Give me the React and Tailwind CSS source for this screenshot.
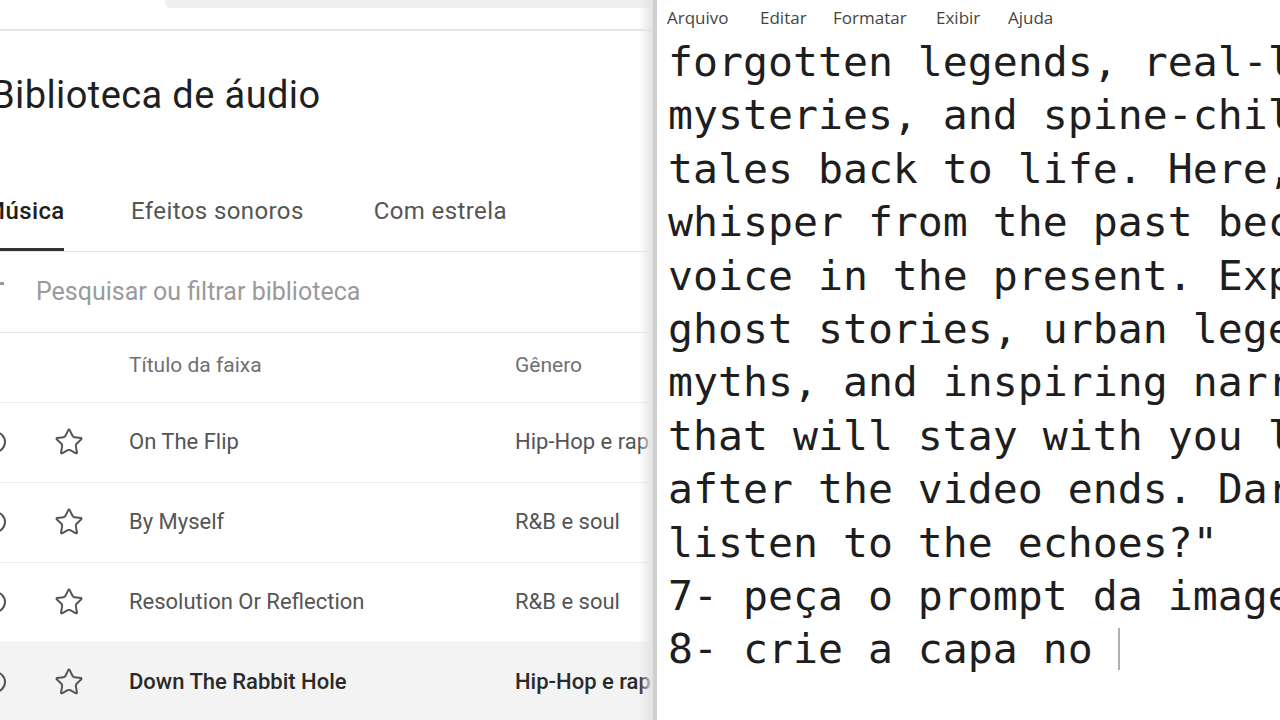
import { Star } from 'lucide-react';

const tracks = [
  { title: 'On The Flip', genre: 'Hip-Hop e rap' },
  { title: 'By Myself', genre: 'R&B e soul' },
  { title: 'Resolution Or Reflection', genre: 'R&B e soul' },
  { title: 'Down The Rabbit Hole', genre: 'Hip-Hop e rap', active: true },
];

const lines = [
  'forgotten legends, real-life',
  'mysteries, and spine-chilling',
  'tales back to life. Here, every',
  'whisper from the past becomes a',
  'voice in the present. Explore',
  'ghost stories, urban legends,',
  'myths, and inspiring narratives',
  'that will stay with you long',
  'after the video ends. Dare to',
  'listen to the echoes?"',
  '7- peça o prompt da imagem',
];

const AudioLibrary = () => (
  <div className="relative w-[653px] shrink-0 h-full overflow-hidden bg-white font-['Roboto',sans-serif]">
    {/* top bar */}
    <div className="h-[31px] border-b-2 border-[#e6e6e6]">
      <div className="ml-[165px] w-[485px] h-[8px] bg-[#efefef] rounded-b-md" />
    </div>

    <div className="h-[120px] pt-[42px]">
      <h1 className="-ml-[9px] text-[38px] leading-[44px] tracking-[0.4px] text-[#1f1f1f] whitespace-nowrap">Biblioteca de áudio</h1>
    </div>

    {/* tabs */}
    <div className="h-[101px] flex items-end border-b border-[#e5e5e5]">
      <div className="flex items-end text-[24px] leading-[28px] tracking-[0.4px] text-[#555] whitespace-nowrap">
        <div className="-ml-[16px] w-[80px] flex flex-col">
          <span className="text-[#1f1f1f] font-medium">Música</span>
          <span className="mt-[23px] h-[3px] w-[80px] bg-[#333]" />
        </div>
        <span className="ml-[67px] mb-[26px]">Efeitos sonoros</span>
        <span className="ml-[70px] mb-[26px]">Com estrela</span>
      </div>
    </div>

    {/* search */}
    <div className="h-[81px] flex items-center border-b border-[#e8e8e8] text-[25px] text-[#9a9a9a] whitespace-nowrap">
      <span className="-ml-[4px] w-[8px] h-[3px] bg-[#9a9a9a] -mt-[18px]" />
      <span className="ml-[32px]">Pesquisar ou filtrar biblioteca</span>
    </div>

    {/* header */}
    <div className="h-[70px] pb-[4px] flex items-center border-b border-[#ececec] text-[21px] text-[#707070]">
      <span className="ml-[129px] w-[386px]">Título da faixa</span>
      <span>Gênero</span>
    </div>

    {tracks.map((t) => (
      <div
        key={t.title}
        className={`h-[80px] pb-[2px] flex items-center border-b border-[#ececec] text-[22px] whitespace-nowrap ${t.active ? 'bg-[#f3f3f3] text-[#2a2a2a] font-medium' : 'text-[#555]'}`}
      >
        <span className="-ml-[16px] w-[22px] h-[22px] rounded-full border-2 border-[#555] shrink-0" />
        <Star className="ml-[48px] w-[30px] h-[30px] text-[#555] shrink-0" strokeWidth={1.6} />
        <span className="ml-[45px] w-[386px]">{t.title}</span>
        <span>{t.genre}</span>
      </div>
    ))}

    {/* right edge shade */}
    <div className="absolute top-0 right-0 h-full w-[14px] bg-gradient-to-r from-transparent to-[#e2e2e2]" />
  </div>
);

const Notepad = () => (
  <div className="flex-1 h-full overflow-hidden bg-white border-l-[4px] border-[#cfcfcf]">
    <div className="h-[35px] flex items-center pl-[10px] pt-[1px] text-[17px] text-[#444] font-['Open_Sans',sans-serif] whitespace-nowrap">
      <span className="w-[93px]">Arquivo</span>
      <span className="w-[73px]">Editar</span>
      <span className="w-[103px]">Formatar</span>
      <span className="w-[72px]">Exibir</span>
      <span>Ajuda</span>
    </div>
    <div className="pl-[11px] font-['DejaVu_Sans_Mono',monospace] text-[41.5px] leading-[53.4px] text-[#1e1e1e] whitespace-pre">
      {lines.map((l) => (
        <div key={l}>{l}</div>
      ))}
      <div className="flex items-center">
        <span>8- crie a capa no </span>
        <span className="w-[2px] h-[42px] bg-[#b0b0b0]" />
      </div>
    </div>
  </div>
);

export default function App() {
  return (
    <div className="w-[1280px] h-[720px] flex overflow-hidden bg-white">
      <AudioLibrary />
      <Notepad />
    </div>
  );
}
